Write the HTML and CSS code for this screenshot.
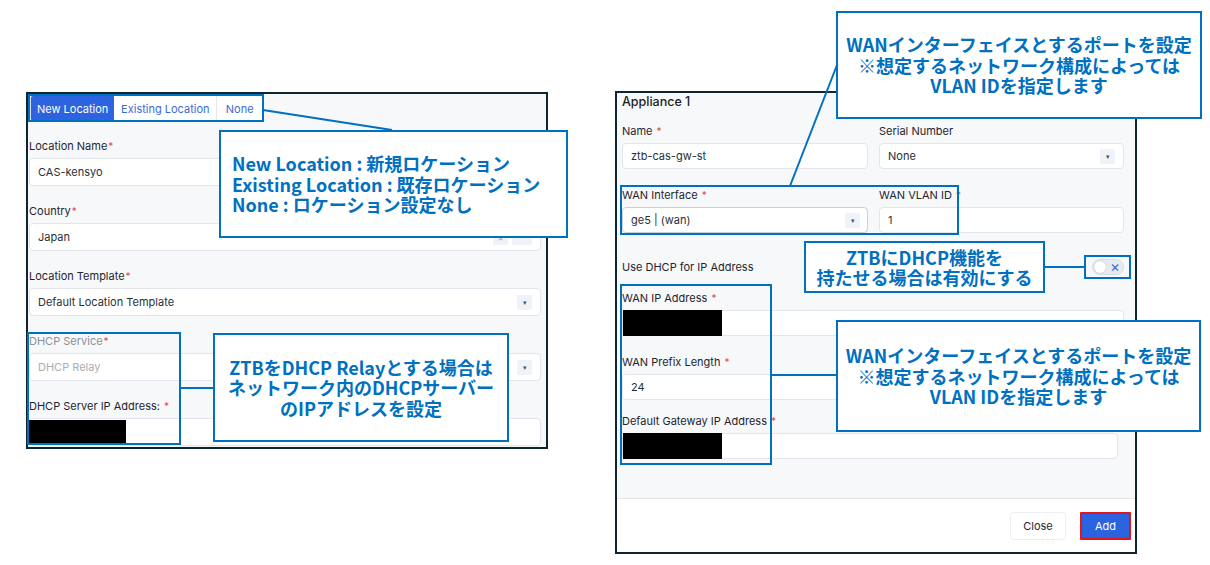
FILE: index.html
```html
<!DOCTYPE html>
<html lang="ja">
<head>
    <meta charset="UTF-8">
    <title>ZTB Location / Appliance</title>
    <link rel="stylesheet" href="styles.css">
</head>
<body>
    <div class="canvas">
        <!-- left capture: location settings -->
        <section class="shot shot-location">
            <div class="tabs">
                <span class="tab tab-active">New Location</span>
                <span class="tab tab-wide">Existing Location</span>
                <span class="tab tab-none">None</span>
            </div>

            <div class="field field-first">
                <div class="label">Location Name<span class="req">*</span></div>
                <div class="input">CAS-kensyo</div>
            </div>
            <div class="field">
                <div class="label">Country<span class="req">*</span></div>
                <div class="input select">Japan
                    <span class="ico-box ico-clear">×</span>
                    <span class="ico-box">⌃</span>
                </div>
            </div>
            <div class="field">
                <div class="label">Location Template<span class="req">*</span></div>
                <div class="input select">Default Location Template
                    <span class="ico-box">▾</span>
                </div>
            </div>
            <div class="field field-disabled">
                <div class="label">DHCP Service<span class="req">*</span></div>
                <div class="input select">DHCP Relay
                    <span class="ico-box">▾</span>
                </div>
            </div>
            <div class="field">
                <div class="label">DHCP Server IP Address: <span class="req">*</span></div>
                <div class="input input-redacted"><span class="redact"></span></div>
            </div>
        </section>

        <!-- right capture: appliance dialog -->
        <section class="shot shot-appliance">
            <div class="appl-body">
                <h2 class="appl-title">Appliance 1</h2>
                <div class="grid2">
                    <div class="field field-sm">
                        <div class="label">Name <span class="req">*</span></div>
                        <div class="input">ztb-cas-gw-st</div>
                    </div>
                    <div class="field field-sm">
                        <div class="label">Serial Number</div>
                        <div class="input select">None<span class="ico-box">▾</span></div>
                    </div>
                    <div class="field field-sm">
                        <div class="label">WAN Interface <span class="req">*</span></div>
                        <div class="input select input-focus">ge5 | (wan)<span class="ico-box">▾</span></div>
                    </div>
                    <div class="field field-sm">
                        <div class="label">WAN VLAN ID <span class="req">*</span></div>
                        <div class="input">1</div>
                    </div>
                </div>

                <div class="toggle-row">
                    <span class="label">Use DHCP for IP Address</span>
                    <span class="toggle"><span class="knob"></span><span class="toggle-x">×</span></span>
                </div>

                <div class="field field-sm">
                    <div class="label">WAN IP Address <span class="req">*</span></div>
                    <div class="input input-redacted"><span class="redact"></span></div>
                </div>
                <div class="field field-sm field-tight">
                    <div class="label">WAN Prefix Length <span class="req">*</span></div>
                    <div class="input">24</div>
                </div>
                <div class="field field-sm">
                    <div class="label">Default Gateway IP Address <span class="req">*</span></div>
                    <div class="input input-redacted input-narrow"><span class="redact"></span></div>
                </div>
            </div>
            <div class="appl-footer">
                <button class="btn btn-close">Close</button>
                <button class="btn btn-add">Add</button>
            </div>
        </section>

        <!-- annotation frames and leader lines -->
        <svg class="marks" width="1210" height="565" viewBox="0 0 1210 565">
            <rect x="29" y="95" width="234" height="26"/>
            <line x1="263" y1="110" x2="392" y2="130"/>
            <rect x="28" y="333" width="152" height="111"/>
            <line x1="180" y1="388" x2="213" y2="388"/>
            <rect x="621" y="186" width="337" height="48"/>
            <line x1="790" y1="186" x2="837" y2="65"/>
            <rect x="1085" y="256" width="45" height="22"/>
            <line x1="1045" y1="267" x2="1085" y2="267"/>
            <rect x="621" y="285" width="150" height="179"/>
            <line x1="771" y1="375" x2="836" y2="375"/>
        </svg>

        <div class="callout callout-tabs">
            <p>New Location : 新規ロケーション</p>
            <p>Existing Location : 既存ロケーション</p>
            <p>None : ロケーション設定なし</p>
        </div>
        <div class="callout callout-relay">
            <p>ZTBをDHCP Relayとする場合は</p>
            <p>ネットワーク内のDHCPサーバー</p>
            <p>のIPアドレスを設定</p>
        </div>
        <div class="callout callout-wan">
            <p>WANインターフェイスとするポートを設定</p>
            <p>※想定するネットワーク構成によっては</p>
            <p>VLAN IDを指定します</p>
        </div>
        <div class="callout callout-dhcp">
            <p>ZTBにDHCP機能を</p>
            <p>持たせる場合は有効にする</p>
        </div>
        <div class="callout callout-ip">
            <p>WANインターフェイスとするポートを設定</p>
            <p>※想定するネットワーク構成によっては</p>
            <p>VLAN IDを指定します</p>
        </div>
    </div>
</body>
</html>
```

FILE: styles.css
```css
* {
    margin: 0;
    padding: 0;
    box-sizing: border-box;
}

body {
    background-color: #ffffff;
    font-family: Inter, "Noto Sans", sans-serif;
    font-size: 11px;
    color: #1f2530;
}

.canvas {
    position: relative;
    width: 1210px;
    height: 565px;
    display: flex;
    align-items: flex-start;
    overflow: hidden;
}

/* screenshots */
.shot {
    border: 2px solid #0e2531;
    background-color: #f7f8fa;
    overflow: hidden;
}

.shot-location {
    width: 522px;
    height: 357px;
    margin: 92px 0 0 26px;
    padding: 1px 5px 0 1px;
}

.shot-appliance {
    width: 522px;
    height: 463px;
    margin: 91px 0 0 67px;
    background-color: #ffffff;
}

.tabs {
    display: flex;
    width: 233px;
    height: 27px;
    margin-left: 1px;
    background-color: #ffffff;
    border: 1px solid #dbe1ea;
    border-radius: 3px;
    overflow: hidden;
}

.tab {
    display: flex;
    align-items: center;
    justify-content: center;
    width: 84px;
    color: #3a6ad6;
    border-left: 1px solid #e6eaf0;
}

.tab-active {
    background-color: #2d63df;
    color: #ffffff;
    border-left: none;
}

.tab-wide {
    width: 103px;
    border-left: none;
}

.tab-none {
    width: 46px;
}

.field {
    margin-bottom: 18px;
}

.field-first {
    margin-top: 17px;
}

.label {
    height: 14px;
    line-height: 14px;
    margin-bottom: 5px;
    color: #1f2530;
    white-space: nowrap;
}

.req {
    color: #e24a4a;
    font-size: 10px;
    margin-left: 1px;
}

.input {
    display: flex;
    align-items: center;
    height: 28px;
    padding-left: 8px;
    background-color: #ffffff;
    border: 1px solid #e2e6ec;
    border-radius: 4px;
    color: #2a2f37;
}

.select {
    padding-right: 8px;
}

.ico-box {
    display: flex;
    align-items: center;
    justify-content: center;
    width: 15px;
    height: 15px;
    margin-left: auto;
    background-color: #eff3f9;
    border-radius: 2px;
    font-size: 7px;
    color: #4b5260;
}

.ico-clear {
    margin-right: 4px;
    font-size: 10px;
    color: #9aa2ae;
}

.ico-clear + .ico-box {
    margin-left: 0;
    width: 20px;
    font-size: 10px;
}

.field-disabled .label {
    color: #8b9099;
}

.field-disabled .input {
    color: #a9aeb6;
}

.input-redacted {
    padding-left: 0;
}

.redact {
    display: block;
    width: 99px;
    height: 25px;
    margin-left: -3px;
    background-color: #000000;
}

/* appliance dialog */
.appl-body {
    height: 406px;
    padding: 1px 11px 0 5px;
    background-color: #f7f8fa;
    border-bottom: 1px solid #e1e5ea;
}

.appl-title {
    height: 16px;
    line-height: 16px;
    margin-bottom: 14px;
    font-size: 12.5px;
    font-weight: 500;
    color: #1b1f27;
}

.grid2 {
    display: grid;
    grid-template-columns: 246px 245px;
    column-gap: 11px;
}

.field-sm {
    margin-bottom: 19px;
}

.field-tight {
    margin-bottom: 14px;
}

.field-sm .input {
    height: 26px;
}

.input-focus {
    border-color: #c9d0da;
}

.input-focus .ico-box {
    margin-right: -1px;
}

.input-narrow {
    margin-right: 6px;
}

.field-sm .redact {
    height: 26px;
    margin-left: 0;
}

.toggle-row {
    display: flex;
    align-items: center;
    justify-content: space-between;
    height: 30px;
    margin-bottom: 9px;
}

.toggle-row .label {
    margin: 0;
}

.toggle {
    display: flex;
    align-items: center;
    width: 32px;
    height: 16px;
    padding: 0 3px 0 1px;
    background-color: #e7ebf1;
    border: 1px solid #d6dce4;
    border-radius: 8px;
}

.knob {
    width: 12px;
    height: 12px;
    background-color: #ffffff;
    border-radius: 50%;
    box-shadow: 0 0 1px rgba(0, 0, 0, 0.35);
}

.toggle-x {
    margin-left: auto;
    font-size: 15px;
    line-height: 14px;
    color: #3f6fd8;
}

.appl-footer {
    display: flex;
    justify-content: flex-end;
    gap: 14px;
    padding: 13px 4px 0 0;
}

.btn {
    height: 28px;
    border-radius: 4px;
    font-family: Inter, "Noto Sans", sans-serif;
    font-size: 11px;
    cursor: pointer;
}

.btn-close {
    width: 56px;
    background-color: #ffffff;
    border: 1px solid #eceff3;
    color: #1f2530;
}

.btn-add {
    width: 51px;
    background-color: #2b62de;
    border: 2px solid #e4141b;
    border-radius: 1px;
    color: #ffffff;
}

/* annotations */
.marks {
    position: absolute;
    left: 0;
    top: 0;
    pointer-events: none;
}

.marks rect,
.marks line {
    fill: none;
    stroke: #0070c0;
    stroke-width: 2;
}

.callout {
    position: absolute;
    display: flex;
    flex-direction: column;
    justify-content: center;
    align-items: center;
    background-color: #ffffff;
    border: 2px solid #0070c0;
    font-family: "Noto Sans CJK JP", sans-serif;
    font-weight: 700;
    font-size: 18px;
    line-height: 20.5px;
    color: #0070c0;
    white-space: nowrap;
}

.callout-tabs {
    left: 219px;
    top: 130px;
    width: 349px;
    height: 108px;
    align-items: flex-start;
    padding-left: 11px;
}

.callout-relay {
    left: 213px;
    top: 333px;
    width: 296px;
    height: 109px;
}

.callout-wan {
    left: 836px;
    top: 11px;
    width: 366px;
    height: 108px;
}

.callout-dhcp {
    left: 804px;
    top: 241px;
    width: 241px;
    height: 52px;
    line-height: 20.5px;
}

.callout-ip {
    left: 836px;
    top: 320px;
    width: 365px;
    height: 112px;
}
```
